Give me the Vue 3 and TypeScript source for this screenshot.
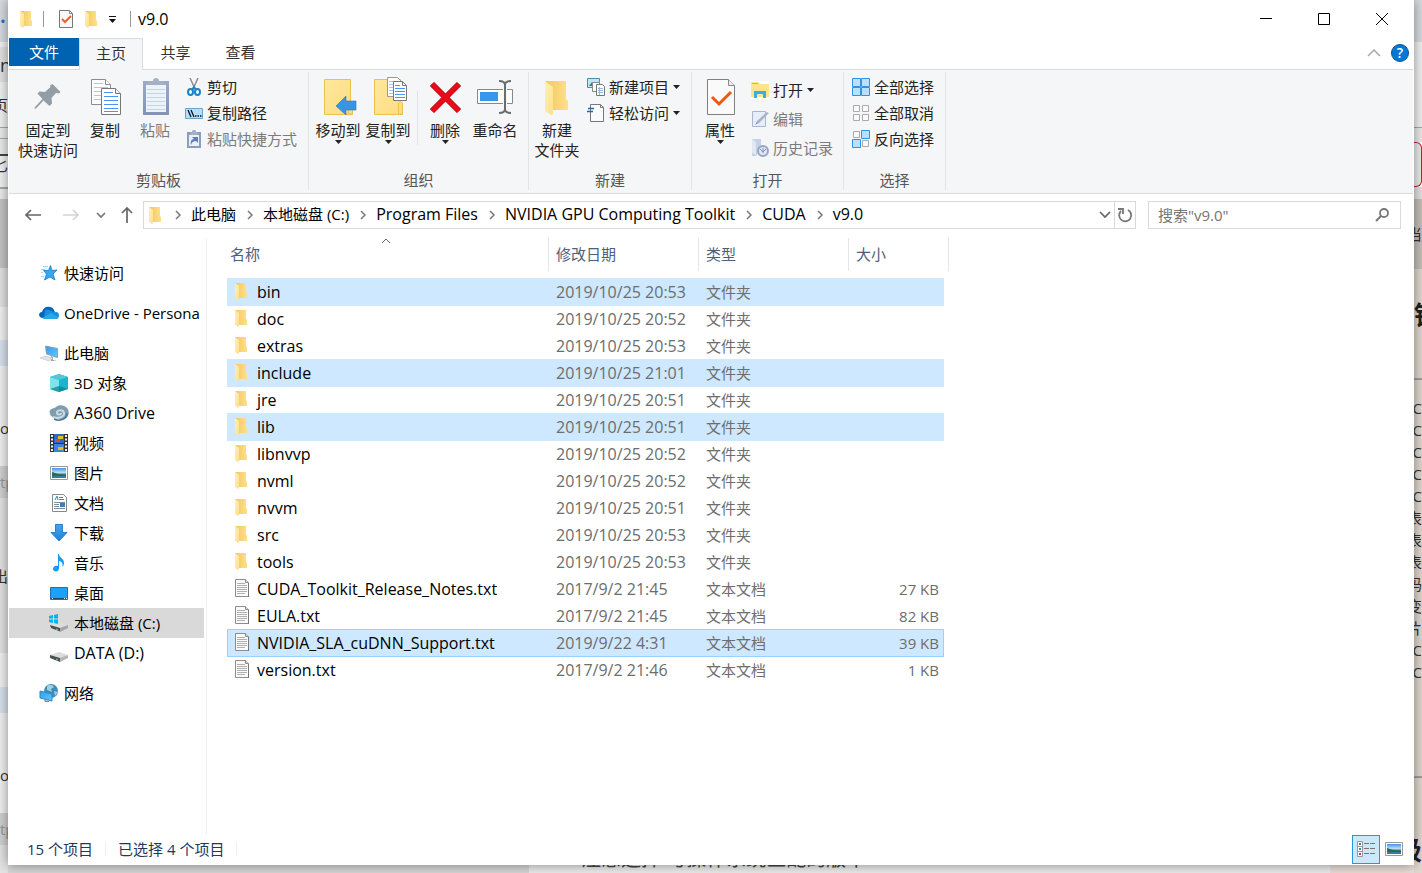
<script setup lang="ts">
import { ref } from 'vue'

interface SmallCommand {
  icon: string
  label: string
  disabled?: boolean
  menu?: boolean
}

interface TreeItem {
  icon: string
  label: string
  level: number
  current?: boolean
  gap?: boolean
}

interface Entry {
  name: string
  date: string
  kind: 'folder' | 'text'
  size?: string
  selected?: boolean
  focused?: boolean
}

interface Slice {
  h: number
  tone: string
  text?: string
  look?: string
}

const search = ref('')

const isLatin = (s: string) => /^[\x20-\x7e]+$/.test(s)

const clipboardCommands: SmallCommand[] = [
  { icon: 'scissors', label: '剪切' },
  { icon: 'path', label: '复制路径' },
  { icon: 'shortcut', label: '粘贴快捷方式', disabled: true },
]
const newCommands: SmallCommand[] = [
  { icon: 'newitem', label: '新建项目', menu: true },
  { icon: 'easy', label: '轻松访问', menu: true },
]
const openCommands: SmallCommand[] = [
  { icon: 'open', label: '打开', menu: true },
  { icon: 'edit', label: '编辑', disabled: true },
  { icon: 'history', label: '历史记录', disabled: true },
]
const selectCommands: SmallCommand[] = [
  { icon: 'selall', label: '全部选择' },
  { icon: 'selnone', label: '全部取消' },
  { icon: 'selinv', label: '反向选择' },
]

const crumbs = ['此电脑', '本地磁盘 (C:)', 'Program Files', 'NVIDIA GPU Computing Toolkit', 'CUDA', 'v9.0']

const tree: TreeItem[] = [
  { icon: 'star', label: '快速访问', level: 0 },
  { icon: 'cloud', label: 'OneDrive - Persona', level: 0, gap: true },
  { icon: 'pc', label: '此电脑', level: 0, gap: true },
  { icon: 'cube', label: '3D 对象', level: 1 },
  { icon: 'a360', label: 'A360 Drive', level: 1 },
  { icon: 'video', label: '视频', level: 1 },
  { icon: 'picture', label: '图片', level: 1 },
  { icon: 'document', label: '文档', level: 1 },
  { icon: 'download', label: '下载', level: 1 },
  { icon: 'music', label: '音乐', level: 1 },
  { icon: 'desktop', label: '桌面', level: 1 },
  { icon: 'drivec', label: '本地磁盘 (C:)', level: 1, current: true },
  { icon: 'drive', label: 'DATA (D:)', level: 1 },
  { icon: 'network', label: '网络', level: 0, gap: true },
]

const entries: Entry[] = [
  { name: 'bin', date: '2019/10/25 20:53', kind: 'folder', selected: true },
  { name: 'doc', date: '2019/10/25 20:52', kind: 'folder' },
  { name: 'extras', date: '2019/10/25 20:53', kind: 'folder' },
  { name: 'include', date: '2019/10/25 21:01', kind: 'folder', selected: true },
  { name: 'jre', date: '2019/10/25 20:51', kind: 'folder' },
  { name: 'lib', date: '2019/10/25 20:51', kind: 'folder', selected: true },
  { name: 'libnvvp', date: '2019/10/25 20:52', kind: 'folder' },
  { name: 'nvml', date: '2019/10/25 20:52', kind: 'folder' },
  { name: 'nvvm', date: '2019/10/25 20:51', kind: 'folder' },
  { name: 'src', date: '2019/10/25 20:53', kind: 'folder' },
  { name: 'tools', date: '2019/10/25 20:53', kind: 'folder' },
  { name: 'CUDA_Toolkit_Release_Notes.txt', date: '2017/9/2 21:45', kind: 'text', size: '27 KB' },
  { name: 'EULA.txt', date: '2017/9/2 21:45', kind: 'text', size: '82 KB' },
  { name: 'NVIDIA_SLA_cuDNN_Support.txt', date: '2019/9/22 4:31', kind: 'text', size: '39 KB', selected: true, focused: true },
  { name: 'version.txt', date: '2017/9/2 21:46', kind: 'text', size: '1 KB' },
]

// Slices of the page that stays open behind the window.
const leftSlices: Slice[] = [
  { h: 42, tone: 'chrome', text: '•', look: 'dot' },
  { h: 5, tone: 'light' },
  { h: 35, tone: 'soft', text: 'n', look: 'big' },
  { h: 45, tone: 'light', text: '页', look: 'tail' },
  { h: 11, tone: 'ruled' },
  { h: 16, tone: 'ruled' },
  { h: 19, tone: 'boxed', text: '匕', look: 'tail' },
  { h: 15, tone: 'boxend' },
  { h: 11, tone: 'ruled' },
  { h: 69, tone: 'dark', text: '' },
  { h: 39, tone: 'soft' },
  { h: 33, tone: 'light' },
  { h: 26, tone: 'blue' },
  { h: 24, tone: 'light' },
  { h: 76, tone: 'light', text: 'or' },
  { h: 32, tone: 'mid', text: 'tp', look: 'faint' },
  { h: 155, tone: 'soft', text: '出', look: 'tail' },
  { h: 34, tone: 'light' },
  { h: 26, tone: 'blue' },
  { h: 24, tone: 'light' },
  { h: 76, tone: 'light', text: 'or' },
  { h: 32, tone: 'mid', text: 'tp', look: 'faint' },
  { h: 28, tone: 'soft' },
]
const rightSlices: Slice[] = [
  { h: 42, tone: 'chrome' },
  { h: 85, tone: 'light' },
  { h: 15, tone: 'ruled' },
  { h: 45, tone: 'redbox' },
  { h: 12, tone: 'soft' },
  { h: 70, tone: 'stone', text: '当', look: 'tail' },
  { h: 92, tone: 'sand', text: '错', look: 'bold' },
  { h: 0, tone: 'sand' },
  { h: 36, tone: 'sand', text: '━', look: 'faint' },
  ...['C', 'C', 'C', 'C', 'C', '表', '表', '表', '码', '变', '片', 'C', 'C'].map((text) => ({ h: 22, tone: 'sand', text, look: 'tail' })),
  { h: 69, tone: 'sand' },
  { h: 50, tone: 'sand', text: '━', look: 'faint' },
  { h: 96, tone: 'sand', text: '极', look: 'bold tail' },
]
</script>

<template>
  <div class="screen">
    <svg class="sprite" aria-hidden="true">
      <defs>
        <linearGradient id="gFront" x1="0" x2="1" y1="0" y2="1"><stop offset="0" stop-color="#fff0b8" /><stop offset="1" stop-color="#ffe08a" /></linearGradient>
        <linearGradient id="gBack" x1="0" x2="1"><stop offset="0" stop-color="#efc75e" /><stop offset="1" stop-color="#ffe08a" /></linearGradient>
        <linearGradient id="gBlue" x1="0" x2="0" y1="0" y2="1"><stop offset="0" stop-color="#44a4ee" /><stop offset="1" stop-color="#1f82d6" /></linearGradient>
        <linearGradient id="gScreen" x1="0" x2="1" y1="0" y2="1"><stop offset="0" stop-color="#2b9cf0" /><stop offset="1" stop-color="#60c8ff" /></linearGradient>
        <linearGradient id="gClip" x1="0" x2="0" y1="0" y2="1"><stop offset="0" stop-color="#9aabc8" /><stop offset="1" stop-color="#8194b8" /></linearGradient>
        <linearGradient id="gSky" x1="0" x2="0" y1="0" y2="1"><stop offset="0" stop-color="#4a92ee" /><stop offset="0.5" stop-color="#c4e4f8" /><stop offset="0.6" stop-color="#3c7c66" /><stop offset="1" stop-color="#3a76c0" /></linearGradient>
        <linearGradient id="gYellow" x1="0" x2="1" y1="0" y2="1"><stop offset="0" stop-color="#ffe89c" /><stop offset="1" stop-color="#fbdc82" /></linearGradient>
      </defs>
      <symbol id="folder" viewBox="0 0 14 18">
        <path d="M1 1h11v9l1 1v5H5z" fill="url(#gBack)" />
        <path d="M1 1l4 3v13l-1 1-3-2z" fill="url(#gFront)" />
      </symbol>
      <symbol id="text" viewBox="0 0 16 18">
        <path d="M1.500 0.500h10l3 3v14h-13z" fill="#fafafa" stroke="#8c8c8c" />
        <path d="M11.500 0.500v3h3" fill="#ddd" stroke="#8c8c8c" />
        <path d="M3 4.500h8M3 6.500h10M3 8.500h10M3 10.500h10M3 12.500h10M3 14.500h8" stroke="#b0b0b0" />
        <path d="M14.500 4v14" stroke="#777" />
      </symbol>
      <symbol id="check" viewBox="0 0 16 18">
        <path d="M1.500 0.500h10l3 3v14h-13z" fill="#f8f8f8" stroke="#777" />
        <path d="M11.500 0.500v3h3" fill="none" stroke="#888" />
        <path d="M4 9l3 3 6-6" fill="none" stroke="#f2601c" stroke-width="2" />
      </symbol>
      <symbol id="pin" viewBox="0 0 40 40">
        <path d="M24.500 7l8 8-1.500 1.500-3-.5-4.500 5 .5 5.500-2.500 2.500-6-5.500-7.500 8-1.500.5.500-2L14.500 22l-5-5.500L11.500 14.500l5.500.5 5.500-5-.5-1.500z" fill="#929da6" />
      </symbol>
      <symbol id="copy" viewBox="0 0 40 40">
        <path d="M6.500 2.500h14l5 5v20h-19z" fill="#fafcff" stroke="#8c8c8c" />
        <path d="M20.500 2.500v5h5" fill="#fff" stroke="#8c8c8c" />
        <path d="M9 6.500h9M9 10.500h14M9 14.500h9M9 18.500h8M9 22.500h8" stroke="#a8c8f4" />
        <path d="M16.500 11.500h14l5 5v21h-19z" fill="#fff" stroke="#777" />
        <path d="M30.500 11.500v5h5" fill="#f0f0f0" stroke="#777" />
        <path d="M19 15.500h9M19 19.500h14M19 23.500h14M19 27.500h14M19 31.500h14M19 34.500h14" stroke="#4d94f0" />
      </symbol>
      <symbol id="paste" viewBox="0 0 40 40">
        <path d="M8 4h26v34H8z" fill="url(#gClip)" /><path d="M11 8h20v27H11z" fill="#edf3fb" />
        <path d="M12 12.500h18M12 16.500h18M12 20.500h18M12 24.500h18M12 28.500h18M12 32.500h18" stroke="#c5d3e8" />
        <path d="M11 8l2-4h5c0-4 6-4 6 0h5l2 4z" fill="#a5b0c5" />
      </symbol>
      <symbol id="moveto" viewBox="0 0 40 40">
        <path d="M6.500 2.500h26v25l2 2v8h-28z" fill="url(#gYellow)" stroke="#eac250" />
        <path d="M30.500 37v-10q2-3 4 0v10z" fill="#ffdf7c" stroke="#eac250" />
        <path d="M18 29l10-10v5h10v9H28v5z" fill="#3796e4" stroke="#2478c8" stroke-width=".6" />
      </symbol>
      <symbol id="copyto" viewBox="0 0 40 40">
        <path d="M6.500 2.500h26v22l2 2v11h-28z" fill="url(#gYellow)" stroke="#eac250" />
        <path d="M30.500 37v-11q2-3 4 0v11z" fill="#ffdf7c" stroke="#eac250" />
        <path d="M19.500.5h10l4 4v15h-14z" fill="#fff" stroke="#999" /><path d="M21 4.500h7M21 7.500h9M21 10.500h5M21 13.500h4M21 16.500h4" stroke="#a0c4f4" />
        <path d="M25.500 4.500h9l4 4v15h-13z" fill="#fff" stroke="#777" /><path d="M34.500 4.500v4h4" fill="none" stroke="#777" />
        <path d="M27 8.500h5M27 11.500h10M27 14.500h10M27 17.500h10M27 20.500h10" stroke="#4d94f0" />
      </symbol>
      <symbol id="delete" viewBox="0 0 40 40">
        <path d="M7 7l27 27M34 7L7 34" stroke="#b80912" stroke-width="6" /><path d="M7 7l27 27M34 7L7 34" stroke="#e90b18" stroke-width="4.500" />
      </symbol>
      <symbol id="rename" viewBox="0 0 40 40">
        <path d="M2.500 12.500h35v14h-35z" fill="#fff" stroke="#888" /><path d="M5 15h18v9H5z" fill="#3498ee" />
        <path d="M24 4q6 0 6 4 0-4 6-4M30 7v26M24 36q6 0 6-4 0 4 6 4" fill="none" stroke="#f5f6f7" stroke-width="4" />
        <path d="M24 4q6 0 6 4 0-4 6-4M30 7v26M24 36q6 0 6-4 0 4 6 4" fill="none" stroke="#6d6d6d" stroke-width="2" />
      </symbol>
      <symbol id="newfolder" viewBox="0 0 40 40">
        <path d="M8 4h21v18l2 2v9H16z" fill="url(#gBack)" /><path d="M8 4l8 6v27l-2 1-6-4z" fill="url(#gFront)" />
      </symbol>
      <symbol id="props" viewBox="0 0 40 40">
        <path d="M7.500 2.500h21l6 6v29h-27z" fill="#fafafa" stroke="#808080" /><path d="M28.500 2.500v6h6" fill="#eee" stroke="#888" />
        <path d="M12 20l7 7 12-12" fill="none" stroke="#f0570f" stroke-width="3" />
      </symbol>
      <symbol id="scissors" viewBox="0 0 18 18">
        <path d="M5 0l5 11M13 0L8 11" stroke="#8a8f94" stroke-width="1.500" fill="none" />
        <ellipse cx="5.500" cy="14" rx="2.500" ry="3" fill="none" stroke="#1b83c8" stroke-width="2" /><ellipse cx="12.500" cy="14" rx="2.500" ry="3" fill="none" stroke="#1b83c8" stroke-width="2" />
        <path d="M7 12l2-3 2 3" fill="none" stroke="#1b83c8" stroke-width="2" />
      </symbol>
      <symbol id="path" viewBox="0 0 18 18">
        <path d="M.5 4.500h17v10H.5z" fill="#b4dffc" stroke="#6aa5c9" /><path d="M3 6l3 7M6 6l3 7M10 12h1.500M12.500 12H14M15 12h1.500" stroke="#111" stroke-width="1.300" />
      </symbol>
      <symbol id="shortcut" viewBox="0 0 18 18">
        <path d="M2 2h14v16H2z" fill="#8c9dbd" /><path d="M4 5h10v11H4z" fill="#e9f0fa" /><path d="M5 5l1-3h1c0-3 4-3 4 0h1l1 3z" fill="#a3b0c8" />
        <path d="M6 15c-1-4 1-6 3-6L7 7h6v6l-2-2c-3 0-4 1-5 4z" fill="#5c7fb4" />
      </symbol>
      <symbol id="newitem" viewBox="0 0 18 18">
        <path d="M.5.5h12v9H.5z" fill="#bfe4f7" stroke="#4f8cab" /><path d="M2 8l3-4 3 4z" fill="#357f78" />
        <path d="M5.500 4.500h7v9h-7z" fill="#fff" stroke="#888" /><path d="M9.500 6.500h6l2 2v9h-8z" fill="#fff" stroke="#777" /><path d="M11 10.500h5M11 12.500h5M11 14.500h5" stroke="#94b8e8" /><path d="M12.500 9v8" stroke="#e99" />
      </symbol>
      <symbol id="easy" viewBox="0 0 18 18">
        <path d="M3.500.5h10l3 3v14h-13z" fill="#fafafa" stroke="#777" /><path d="M13.500.5v3h3" fill="none" stroke="#777" /><path d="M0 7.500h6M1 4.500h6" stroke="#2369ad" stroke-width="1.400" />
      </symbol>
      <symbol id="open" viewBox="0 0 18 18">
        <path d="M0 0h18v18H0z" fill="#fff" /><path d="M0 1h8l1 2h9v13H0z" fill="#ffe48c" /><path d="M1 2h6v1H1z" fill="#f2b600" /><path d="M3 17v-7h12v7h-3v-4H6v4z" fill="#32b0e8" />
      </symbol>
      <symbol id="edit" viewBox="0 0 18 18">
        <path d="M1.500 1.500h13v15h-13z" fill="#e8eef7" stroke="#a8b7d0" /><path d="M5 14l1-3L16 2l2 1L8 13z" fill="#a4b4ce" /><path d="M4 15l2-3 1 1z" fill="#7c8dac" />
      </symbol>
      <symbol id="history" viewBox="0 0 18 18">
        <path d="M1 0h9v10l-5 7H1z" fill="#c4d0e4" /><path d="M1 0l4 3v13l-4-2z" fill="#e0e8f4" /><circle cx="12" cy="12" r="5" fill="#dfe7f3" stroke="#94a5c4" stroke-width="2" /><path d="M9 10l3 3 3-3M12 9v5" stroke="#8092b4" fill="none" />
      </symbol>
      <symbol id="selall" viewBox="0 0 18 18"><path d="M.5.5h8v8h-8zM9.500.5h8v8h-8zM.5 9.500h8v8h-8zM9.500 9.500h8v8h-8z" fill="#b9e1ff" stroke="#2e93e6" /></symbol>
      <symbol id="selnone" viewBox="0 0 18 18"><path d="M1.500 1.500h6v6h-6zM10.500 1.500h6v6h-6zM1.500 10.500h6v6h-6zM10.500 10.500h6v6h-6z" fill="#fafafa" stroke="#aaa" /></symbol>
      <symbol id="selinv" viewBox="0 0 18 18"><path d="M1.500 1.500h6v6h-6zM10.500 10.500h6v6h-6z" fill="#fafafa" stroke="#aaa" /><path d="M9.500.5h8v8h-8zM.5 9.500h8v8h-8z" fill="#b9e1ff" stroke="#2e93e6" /></symbol>
      <symbol id="star" viewBox="0 0 20 20">
        <path d="M11.500 2.500l1.500 5 5-.5-4 4 2 6-5-3-5.500 3 2-6-3-3.500h5z" fill="#35a8f4" stroke="#1679c4" stroke-width=".8" /><path d="M4 3.500h5M2 6.500h4M2 9.500h2M2 13.500h3" stroke="#a6d3f2" />
      </symbol>
      <symbol id="cloud" viewBox="0 0 20 20">
        <path d="M3 9c1-4 4-6 8-5 3 0 4 3 5 5l-8 6H4c-5 0-5-6-1-6z" fill="#0b64b8" /><path d="M6 7c5-2 7 3 11 2 4 0 4 7 0 7H5z" fill="#1490df" /><path d="M3 15l9-5 7 4q-1 2-3 2H5z" fill="#28a8ea" />
      </symbol>
      <symbol id="pc" viewBox="0 0 20 20">
        <path d="M6.500 3l12 2.500v9L7.500 11z" fill="url(#gScreen)" stroke="#8fa0aa" /><path d="M12 13l2 1v3l4 1h-6z" fill="#9aa3a8" /><path d="M1 15l5-2 8 2-4 3z" fill="#e2e5e7" stroke="#bbb" stroke-width=".5" />
      </symbol>
      <symbol id="cube" viewBox="0 0 20 20">
        <path d="M10 1l9 3v12l-9 3-9-3V4z" fill="#18b5cc" /><path d="M1 4l9 3v12l-9-3z" fill="#7ce5ec" /><path d="M1 4l9-3 9 3-9 3z" fill="#56c5d6" /><path d="M10 13l9 3-9 3-9-3z" fill="#087e96" opacity=".7" />
      </symbol>
      <symbol id="a360" viewBox="0 0 20 20">
        <path d="M1 11C-1 5 5 6 7 4c3-3 9-2 11 1 3 3 2 9-2 11-4 2-7 0-8-2-3 1-6 0-7-3z" fill="#7f9dae" /><path d="M4 14c4 2 12 0 11-4-1-4-8-3-7 0 0 2 4 2 4 0" fill="none" stroke="#c9dae2" stroke-width="2" /><path d="M5 16c6 3 13 0 13-6" fill="none" stroke="#50788f" stroke-width="1.500" />
      </symbol>
      <symbol id="video" viewBox="0 0 20 20">
        <path d="M1 1h18v18H1z" fill="#333" /><path d="M5 1h10v9H5z" fill="#3564c8" /><path d="M5 11h10v8H5z" fill="#3f82dc" /><path d="M3 2v17M17 2v17" stroke="#eee" stroke-width="2" stroke-dasharray="2 1.500" /><path d="M9 3h5v3H9z" fill="#d9c226" /><path d="M6 6h5v3H6z" fill="#c6503a" /><path d="M9 14h5v3H9z" fill="#e2bb29" />
      </symbol>
      <symbol id="picture" viewBox="0 0 20 20">
        <path d="M1.500 3.500h17v13h-17z" fill="#fff" stroke="#999" /><path d="M3 5h14v10H3z" fill="url(#gSky)" /><path d="M3 9l6 2 8 1v1H3z" fill="#2c6b50" />
      </symbol>
      <symbol id="document" viewBox="0 0 20 20">
        <path d="M3.500 1.500h11l3 3v14h-14z" fill="#fff" stroke="#888" /><path d="M6 7l2-4 1 4M10 4.500h4M10 6.500h5" fill="none" stroke="#1e95d4" /><path d="M5 9.500h11M5 11.500h5M5 13.500h5M5 15.500h11" stroke="#7a8f9c" /><path d="M11 10h5v4h-5z" fill="#3484b4" />
      </symbol>
      <symbol id="download" viewBox="0 0 20 20"><path d="M6.500 1.500h7v8h4.500L10 18 2 9.500h4.500z" fill="url(#gBlue)" stroke="#2a7ecb" /></symbol>
      <symbol id="music" viewBox="0 0 20 20"><path d="M9 1h1c0 4 5 4 5 9 0 2-1 3-2 4 2-5-2-6-3-6v7c0 5-6 4-6 1s3-4 5-3z" fill="#109cf4" /></symbol>
      <symbol id="desktop" viewBox="0 0 20 20"><path d="M1.500 4.500h17v12h-17z" fill="#1ba1fa" stroke="#1175bd" /><path d="M2 15.500h16" stroke="#164d76" /><path d="M3 15.500h1M15 15.500h1M17 15.500h1" stroke="#fff" /></symbol>
      <symbol id="drive" viewBox="0 0 20 20"><path d="M1 12l9-3 9 3-8 4z" fill="#dcdcdc" /><path d="M1 12l10 3v4L1 15z" fill="#4d504d" /><path d="M11 15l8-3v3l-8 4z" fill="#b5b5b5" /><path d="M7 16l2 1" stroke="#72e38c" /></symbol>
      <symbol id="drivec" viewBox="0 0 20 20"><path d="M1 12l9-3 9 3-8 4z" fill="#ddd" /><path d="M1 12l10 3v3.500L2 15z" fill="#4d504d" /><path d="M11 15l8-3v3l-8 4z" fill="#a5a5a5" /><path d="M7 16l2 1" stroke="#72e38c" /><path d="M0 3l4-1v3.500H0zM5 2l4-1v4.500H5zM0 6.500h4V10l-4-1zM5 6.500h4V11l-4-1z" fill="#00b5ee" /></symbol>
      <symbol id="network" viewBox="0 0 20 20"><circle cx="12" cy="8" r="7" fill="#3d8bb8" /><path d="M8 3q4-3 7 1l-3 2 1 3-5-2zM15 8l4 1-3 4z" fill="#9ed0e3" /><path d="M1 8l12 3v7L1 15z" fill="url(#gScreen)" stroke="#3887ba" /><path d="M5 17l5 1v1H6z" fill="#888" /></symbol>
      <symbol id="caret" viewBox="0 0 7 4"><path d="M0 0h7L3.500 4z" fill="#222" /></symbol>
      <symbol id="crumb" viewBox="0 0 6 10"><path d="M1 1l4 4-4 4" fill="none" stroke="#777" stroke-width="1.500" /></symbol>
    </svg>

    <div class="behind left" aria-hidden="true">
      <div v-for="(s, i) in leftSlices" :key="i" class="slice" :class="[s.tone, s.look]" :style="{ height: s.h + 'px' }">{{ s.text }}</div>
    </div>

    <main class="window">
      <header class="titlebar">
        <svg class="i-folder"><use href="#folder" /></svg>
        <span class="bar"></span>
        <button class="plain" aria-label="属性"><svg class="i-check"><use href="#check" /></svg></button>
        <button class="plain" aria-label="新建文件夹"><svg class="i-folder"><use href="#folder" /></svg></button>
        <button class="plain quick" aria-label="自定义快速访问工具栏"><svg width="7" height="7" viewBox="0 0 7 7"><path d="M0 .5h7" stroke="#111" /><path d="M0 3h7L3.500 7z" fill="#111" /></svg></button>
        <span class="bar"></span>
        <h1>v9.0</h1>
        <div class="controls">
          <button aria-label="最小化"><svg width="12" height="12"><path d="M0 5.500h12" stroke="#000" /></svg></button>
          <button aria-label="最大化"><svg width="12" height="12"><path d="M.5.5h11v11H.5z" fill="none" stroke="#000" /></svg></button>
          <button aria-label="关闭"><svg width="12" height="12"><path d="M0 0l12 12M12 0L0 12" stroke="#000" /></svg></button>
        </div>
      </header>

      <nav class="tabs">
        <button class="file">文件</button>
        <button class="tab active">主页</button>
        <button class="tab">共享</button>
        <button class="tab">查看</button>
        <div class="help">
          <button class="plain" aria-label="最小化功能区"><svg width="14" height="8"><path d="M1 7l6-6 6 6" fill="none" stroke="#aaa" stroke-width="1.500" /></svg></button>
          <button class="question" aria-label="帮助">?</button>
        </div>
      </nav>

      <section class="ribbon">
        <div class="group clipboard">
          <div class="commands">
            <button class="large pin"><svg><use href="#pin" /></svg><span>固定到<br />快速访问</span></button>
            <button class="large"><svg><use href="#copy" /></svg><span>复制</span></button>
            <button class="large paste" disabled><svg><use href="#paste" /></svg><span>粘贴</span></button>
            <div class="stack">
              <button v-for="c in clipboardCommands" :key="c.label" class="small" :disabled="c.disabled"><svg><use :href="'#' + c.icon" /></svg>{{ c.label }}</button>
            </div>
          </div>
          <h2>剪贴板</h2>
        </div>
        <div class="group organize">
          <div class="commands">
            <button class="large"><svg><use href="#moveto" /></svg><span>移动到</span><svg class="caret"><use href="#caret" /></svg></button>
            <button class="large"><svg><use href="#copyto" /></svg><span>复制到</span><svg class="caret"><use href="#caret" /></svg></button>
            <span class="divider"></span>
            <button class="large"><svg><use href="#delete" /></svg><span>删除</span><svg class="caret"><use href="#caret" /></svg></button>
            <button class="large"><svg><use href="#rename" /></svg><span>重命名</span></button>
          </div>
          <h2>组织</h2>
        </div>
        <div class="group create">
          <div class="commands">
            <button class="large"><svg><use href="#newfolder" /></svg><span>新建<br />文件夹</span></button>
            <div class="stack">
              <button v-for="c in newCommands" :key="c.label" class="small"><svg><use :href="'#' + c.icon" /></svg>{{ c.label }}<svg class="caret"><use href="#caret" /></svg></button>
            </div>
          </div>
          <h2>新建</h2>
        </div>
        <div class="group launch">
          <div class="commands">
            <button class="large"><svg><use href="#props" /></svg><span>属性</span><svg class="caret"><use href="#caret" /></svg></button>
            <div class="stack roomy">
              <button v-for="c in openCommands" :key="c.label" class="small" :disabled="c.disabled"><svg><use :href="'#' + c.icon" /></svg>{{ c.label }}<svg v-if="c.menu" class="caret"><use href="#caret" /></svg></button>
            </div>
          </div>
          <h2>打开</h2>
        </div>
        <div class="group choose">
          <div class="commands">
            <div class="stack">
              <button v-for="c in selectCommands" :key="c.label" class="small"><svg><use :href="'#' + c.icon" /></svg>{{ c.label }}</button>
            </div>
          </div>
          <h2>选择</h2>
        </div>
      </section>

      <div class="location">
        <div class="history">
          <button class="plain" aria-label="后退"><svg width="16" height="12"><path d="M6 1L1 6l5 5M1 6h15" fill="none" stroke="#666" stroke-width="1.700" /></svg></button>
          <button class="plain" aria-label="前进" disabled><svg width="16" height="12"><path d="M10 1l5 5-5 5M15 6H0" fill="none" stroke="#d5d5d5" stroke-width="1.700" /></svg></button>
          <button class="plain recent" aria-label="最近浏览的位置"><svg width="10" height="6"><path d="M1 1l4 4 4-4" fill="none" stroke="#777" stroke-width="1.700" /></svg></button>
          <button class="plain" aria-label="上移"><svg width="14" height="16"><path d="M2 6l5-5 5 5M7 1v15" fill="none" stroke="#666" stroke-width="1.700" /></svg></button>
        </div>
        <div class="address">
          <svg class="i-folder"><use href="#folder" /></svg>
          <template v-for="c in crumbs" :key="c">
            <svg class="i-crumb"><use href="#crumb" /></svg>
            <button class="plain crumb" :class="{ latin: isLatin(c) }">{{ c }}</button>
          </template>
          <button class="plain expand" aria-label="以前的位置"><svg width="12" height="8"><path d="M1 1l5 5 5-5" fill="none" stroke="#666" stroke-width="1.700" /></svg></button>
          <button class="plain refresh" aria-label="刷新"><svg width="16" height="16"><path d="M11 3a6 6 0 1 1-7 1M1 2h5v5" fill="none" stroke="#777" stroke-width="1.800" /></svg></button>
        </div>
        <form class="search" @submit.prevent>
          <input v-model="search" type="text" aria-label="搜索 v9.0" placeholder="搜索&quot;v9.0&quot;" />
          <button class="plain" aria-label="搜索"><svg width="14" height="14"><circle cx="9" cy="5" r="4" fill="none" stroke="#777" stroke-width="1.800" /><path d="M6 8l-5 5" stroke="#777" stroke-width="2" /></svg></button>
        </form>
      </div>

      <div class="body">
        <nav class="tree">
          <a v-for="t in tree" :key="t.label" href="#" :class="{ child: t.level === 1, current: t.current, gap: t.gap, latin: t.level === 1 && isLatin(t.label) }">
            <svg><use :href="'#' + t.icon" /></svg><span>{{ t.label }}</span>
          </a>
        </nav>
        <div class="files">
          <table>
            <colgroup><col class="c-name" /><col class="c-mid" /><col class="c-mid" /><col class="c-size" /><col class="c-edge" /></colgroup>
            <thead>
              <tr>
                <th class="sorted">名称<svg width="10" height="6"><path d="M1 5l4-4 4 4" fill="none" stroke="#666" /></svg></th>
                <th>修改日期</th><th>类型</th><th colspan="2">大小</th>
              </tr>
            </thead>
            <tbody>
              <tr v-for="e in entries" :key="e.name" :class="{ selected: e.selected, focused: e.focused }">
                <td class="name latin"><svg :class="e.kind"><use :href="'#' + e.kind" /></svg>{{ e.name }}</td>
                <td class="latin">{{ e.date }}</td>
                <td>{{ e.kind === 'folder' ? '文件夹' : '文本文档' }}</td>
                <td class="size">{{ e.size }}</td>
              </tr>
            </tbody>
          </table>
        </div>
      </div>

      <footer class="status">
        <span>15 个项目</span><span>已选择 4 个项目</span>
        <div class="views">
          <button class="on" aria-label="详细信息"><svg width="20" height="18"><path d="M1.500 1.500h5v15h-5zM1 6.500h6M1 11.500h6" fill="#fff" stroke="#999" /><path d="M3 4h2M3 9h2" stroke="#4a7fae" stroke-width="2" /><path d="M3 14h2" stroke="#c33" stroke-width="2" /><path d="M8 3.500h5M14 3.500h5M8 8.500h5M14 8.500h5M8 13.500h5M14 13.500h5" stroke="#777" /></svg></button>
          <button aria-label="大缩略图"><svg width="20" height="20"><use href="#picture" /></svg></button>
        </div>
      </footer>
    </main>

    <div class="behind right" aria-hidden="true">
      <div v-for="(s, i) in rightSlices" :key="i" class="slice" :class="[s.tone, s.look]" :style="{ height: s.h + 'px' }">{{ s.text }}</div>
    </div>
    <div class="behind bottom" aria-hidden="true"><p>注意选择 与操作系统匹配的版本</p></div>
  </div>
</template>

<style>
body {
  margin: 0;
  overflow: hidden;
}
</style>

<style scoped>
* {
  box-sizing: border-box;
}
.screen {
  position: relative;
  display: grid;
  grid-template-columns: 8px minmax(0, 1fr) 8px;
  grid-template-rows: minmax(0, 1fr) 8px;
  height: 100vh;
  overflow: hidden;
  font: 15px/20px "Open Sans", "Noto Sans CJK SC", sans-serif;
  color: #000;
}
.sprite {
  position: absolute;
  width: 0;
  height: 0;
}
svg {
  display: block;
  flex: none;
}
button {
  font: inherit;
  color: inherit;
  background: none;
  border: 0;
  padding: 0;
  margin: 0;
}
h1,
h2,
p {
  margin: 0;
  font: inherit;
}
.plain {
  display: flex;
  align-items: center;
}
.latin {
  font-size: 16px;
}

.behind {
  overflow: hidden;
}
.left {
  grid-column: 1;
  grid-row: 1 / 3;
}
.right {
  grid-column: 3;
  grid-row: 1 / 3;
}
.bottom {
  grid-column: 2;
  grid-row: 2;
  background: linear-gradient(90deg, #d8d8d8 521px, #eee 521px, #eee calc(100% - 84px), #eadfd8 calc(100% - 84px));
}
.bottom p {
  margin: -18px 0 0 573px;
  font-size: 20px;
  line-height: 24px;
  color: #444;
}
.slice {
  display: flex;
  align-items: center;
  overflow: hidden;
  white-space: nowrap;
  font-size: 15px;
  color: #333;
}
.slice.tail {
  justify-content: flex-end;
}
.slice.chrome {
  background: #d9dde2;
}
.slice.light {
  background: #f3f3f3;
}
.slice.soft {
  background: #e4e4e4;
}
.slice.mid {
  background: #d3d3d3;
}
.slice.dark {
  background: #c6c6c6;
}
.slice.blue {
  background: #d9e4f0;
}
.slice.ruled {
  background: #ececec;
  border-top: 1px solid #aaa;
}
.slice.boxed {
  background: #f3f3f3;
  border-top: 2px solid #444;
}
.slice.boxend {
  background: #f3f3f3;
  border-bottom: 1px solid #aaa;
}
.slice.stone {
  background: #c5c0ba;
}
.slice.sand {
  background: #e2d9d1;
}
.slice.redbox {
  background: #eee;
  border: 1px solid #c8202c;
  border-left: 0;
  border-radius: 0 6px 6px 0;
}
.slice.dot {
  color: #1a6fe8;
}
.slice.big {
  font-size: 18px;
}
.slice.faint {
  color: #999;
}
.slice.bold {
  font-size: 26px;
  font-weight: 700;
  color: #222;
}

.window {
  position: relative;
  grid-column: 2;
  grid-row: 1;
  display: flex;
  flex-direction: column;
  padding: 0 1px;
  background: #fff;
  box-shadow: 0 0 12px rgba(0, 0, 0, 0.45);
}

.titlebar {
  display: flex;
  align-items: center;
  height: 38px;
  padding-left: 10px;
}
.i-folder {
  width: 14px;
  height: 18px;
}
.i-check {
  width: 16px;
  height: 18px;
}
.bar {
  width: 1px;
  height: 16px;
  margin: 0 7px 0 10px;
  background: #999;
}
.titlebar .plain {
  margin-left: 7px;
  margin-right: 3px;
}
.titlebar .quick {
  margin: 0 4px 0 8px;
}
.titlebar h1 {
  font-size: 16px;
}
.controls {
  display: flex;
  margin-left: auto;
  padding-right: 2px;
}
.controls button {
  display: grid;
  place-items: center;
  width: 58px;
  height: 38px;
}

.tabs {
  display: flex;
  height: 32px;
  border-bottom: 1px solid #d9dadc;
}
.file {
  width: 70px;
  height: 28px;
  color: #fff;
  background: #0063b1;
}
.tab {
  width: 65px;
  height: 31px;
  padding-bottom: 3px;
  color: #333;
}
.tab.active {
  width: 64px;
  height: 32px;
  background: #f5f6f7;
  border: 1px solid #dadbdc;
  border-bottom: 0;
}
.help {
  display: flex;
  align-items: center;
  gap: 10px;
  margin-left: auto;
  padding: 0 4px 2px 0;
}
.question {
  width: 18px;
  height: 18px;
  border-radius: 50%;
  background: #0078d7;
  border: 1px solid #0a5494;
  color: #fff;
  font-size: 14px;
  font-weight: 600;
  line-height: 16px;
}

.ribbon {
  display: flex;
  height: 124px;
  padding: 2px 0 3px;
  background: #f5f6f7;
  border-bottom: 1px solid #dadbdc;
  color: #222;
}
.group {
  display: flex;
  flex-direction: column;
  border-right: 1px solid #e2e3e4;
}
.group h2 {
  margin-top: auto;
  text-align: center;
  color: #555;
}
.commands {
  display: flex;
}
.clipboard {
  width: 300px;
}
.clipboard .commands {
  padding-left: 9px;
}
.organize {
  width: 220px;
}
.organize .commands {
  padding-left: 4px;
}
.create {
  width: 163px;
}
.create .commands,
.launch .commands {
  padding-left: 3px;
}
.launch {
  width: 152px;
}
.choose {
  width: 102px;
}
.choose .commands {
  padding-left: 8px;
}
.large {
  display: flex;
  flex-direction: column;
  align-items: center;
  width: 50px;
  padding-top: 5px;
  white-space: nowrap;
}
.large svg {
  width: 40px;
  height: 40px;
  margin-bottom: 3px;
}
.large.pin {
  width: 60px;
  margin-right: 2px;
}
.large.paste {
  margin-right: 5px;
}
.large .caret,
.small .caret {
  width: 7px;
  height: 4px;
  margin: 0;
}
button:disabled {
  color: #7b7b7b;
}
.divider {
  width: 1px;
  height: 54px;
  margin: 19px 2px 0 4px;
  background: #e2e3e4;
}
.stack {
  display: flex;
  flex-direction: column;
  padding-top: 2px;
}
.create .stack {
  margin-left: 5px;
}
.launch .stack {
  margin-left: 6px;
}
.roomy {
  padding-top: 3px;
}
.small {
  display: flex;
  align-items: center;
  gap: 4px;
  height: 26px;
  white-space: nowrap;
}
.roomy .small {
  height: 29px;
}
.small svg {
  width: 18px;
  height: 18px;
}

.location {
  display: flex;
  align-items: center;
  height: 42px;
  padding: 0 12px 0 16px;
}
.history {
  display: flex;
  align-items: center;
  width: 118px;
}
.history .plain {
  margin-right: 22px;
}
.history .recent {
  margin-right: 14px;
  margin-left: -5px;
}
.history .plain:last-child {
  margin-right: 0;
}
.address {
  display: flex;
  align-items: center;
  flex: 1;
  min-width: 0;
  height: 28px;
  padding-left: 4px;
  border: 1px solid #d9d9d9;
  white-space: nowrap;
}
.crumb {
  padding-bottom: 2px;
}
.i-crumb {
  width: 6px;
  height: 10px;
  margin: 0 10px 0 11px;
}
.address .i-folder {
  margin-right: 2px;
}
.expand {
  margin-left: auto;
  padding: 0 3px 0 8px;
}
.refresh {
  height: 26px;
  padding: 0 2px;
  border-left: 1px solid #d9d9d9;
}
.search {
  display: flex;
  align-items: center;
  width: 253px;
  height: 28px;
  margin-left: 12px;
  padding: 0 11px 0 9px;
  border: 1px solid #d9d9d9;
}
.search input {
  flex: 1;
  min-width: 0;
  padding: 0;
  border: 0;
  outline: 0;
  font: inherit;
  background: none;
}
.search input::placeholder {
  color: #757575;
  opacity: 1;
}

.body {
  display: flex;
  flex: 1;
  min-height: 0;
  padding-top: 2px;
}
.tree {
  width: 198px;
  padding-top: 20px;
  padding-right: 2px;
  border-right: 1px solid #f0f0f0;
}
.tree a {
  display: flex;
  align-items: center;
  gap: 5px;
  height: 30px;
  padding-left: 30px;
  color: #000;
  text-decoration: none;
  white-space: nowrap;
}
.tree svg {
  width: 20px;
  height: 20px;
}
.tree a.child {
  padding-left: 40px;
}
.tree a.gap {
  margin-top: 10px;
}
.tree a.current {
  background: #d9d9d9;
}
.files {
  flex: 1;
  padding-left: 20px;
}
table {
  table-layout: fixed;
  width: 722px;
  border-collapse: separate;
  border-spacing: 0;
}
.c-name {
  width: 322px;
}
.c-mid {
  width: 150px;
}
.c-size {
  width: 95px;
}
.c-edge {
  width: 5px;
}
th {
  position: relative;
  height: 33px;
  padding: 0 0 2px 7px;
  border-right: 1px solid #e5e5e5;
  text-align: left;
  font-weight: 400;
  color: #4c607a;
}
th.sorted {
  padding-left: 3px;
}
th svg {
  position: absolute;
  top: 0;
  left: calc(50% - 7px);
}
tbody::before {
  content: "";
  display: block;
  height: 7px;
}
td {
  height: 27px;
  padding: 1px 0 0 7px;
  line-height: 20px;
  color: #6d6d6d;
  white-space: nowrap;
}
td.name {
  display: flex;
  align-items: center;
  color: #000;
}
td.name svg {
  width: 16px;
  height: 18px;
  margin: 0 7px 2px 0;
}
td.name svg.folder {
  width: 14px;
  margin-right: 9px;
}
td.size {
  padding-right: 5px;
  text-align: right;
}
.selected td {
  background: #cde8ff;
  box-shadow: 0 1px #cde8ff;
}
.focused td {
  box-shadow: inset 0 1px #99d1ff, 0 1px #99d1ff;
}
.focused td:first-child {
  box-shadow: inset 1px 1px #99d1ff, 0 1px #99d1ff;
}
.focused td:last-child {
  box-shadow: inset -1px 1px #99d1ff, 0 1px #99d1ff;
}

.status {
  display: flex;
  align-items: center;
  height: 30px;
  padding: 0 0 2px 18px;
  color: #1e395b;
}
.status > span {
  padding-right: 12px;
  margin-right: 12px;
  line-height: 14px;
  border-right: 1px solid #eee;
}
.views {
  display: flex;
  gap: 4px;
  margin-left: auto;
  padding-right: 9px;
}
.views button {
  display: grid;
  place-items: center;
  height: 29px;
}
.views .on {
  width: 28px;
  background: #cce8f8;
  border: 1px solid #2399d6;
}
</style>
